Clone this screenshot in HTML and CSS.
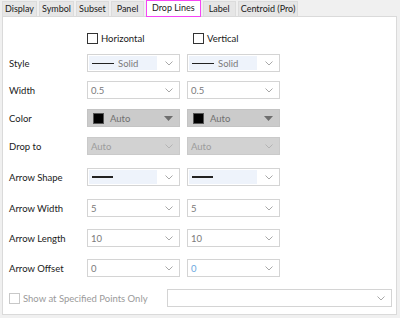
FILE: index.html
```html
<!DOCTYPE html>
<html lang="en">
<head>
    <meta charset="UTF-8">
    <title>Plot Details - Drop Lines</title>
    <link rel="stylesheet" href="styles.css">
</head>
<body>
    <div class="tabs">
        <div class="tab">Display</div>
        <div class="tab">Symbol</div>
        <div class="tab">Subset</div>
        <div class="tab">Panel</div>
        <div class="tab active">Drop Lines</div>
        <div class="tab">Label</div>
        <div class="tab">Centroid (Pro)</div>
    </div>

    <div class="panel">
        <div class="form">
            <div class="row checks">
                <div></div>
                <div class="check"><span class="box"></span>Horizontal</div>
                <div class="check second"><span class="box"></span>Vertical</div>
            </div>

            <div class="row first">
                <div class="label">Style</div>
                <div class="combo"><span class="pick"><span class="line thin"></span>Solid</span><svg class="chev" width="8" height="5" viewBox="0 0 8 5"><polyline points="0.5,0.5 4,4 7.5,0.5" fill="none" stroke="#a8a8a8"/></svg></div>
                <div class="combo"><span class="pick"><span class="line thin"></span>Solid</span><svg class="chev" width="8" height="5" viewBox="0 0 8 5"><polyline points="0.5,0.5 4,4 7.5,0.5" fill="none" stroke="#a8a8a8"/></svg></div>
            </div>

            <div class="row">
                <div class="label">Width</div>
                <div class="combo"><span class="val">0.5</span><svg class="chev" width="8" height="5" viewBox="0 0 8 5"><polyline points="0.5,0.5 4,4 7.5,0.5" fill="none" stroke="#a8a8a8"/></svg></div>
                <div class="combo"><span class="val">0.5</span><svg class="chev" width="8" height="5" viewBox="0 0 8 5"><polyline points="0.5,0.5 4,4 7.5,0.5" fill="none" stroke="#a8a8a8"/></svg></div>
            </div>

            <div class="row">
                <div class="label">Color</div>
                <div class="combo color"><span class="val"><span class="swatch"></span>Auto</span><svg class="tri" width="9" height="5" viewBox="0 0 9 5"><polygon points="0,0 9,0 4.5,5" fill="#6e6e6e"/></svg></div>
                <div class="combo color"><span class="val"><span class="swatch"></span>Auto</span><svg class="tri" width="9" height="5" viewBox="0 0 9 5"><polygon points="0,0 9,0 4.5,5" fill="#6e6e6e"/></svg></div>
            </div>

            <div class="row loose">
                <div class="label">Drop to</div>
                <div class="combo disabled"><span class="val">Auto</span><svg class="chev" width="8" height="5" viewBox="0 0 8 5"><polyline points="0.5,0.5 4,4 7.5,0.5" fill="none" stroke="#b4b4b4"/></svg></div>
                <div class="combo disabled"><span class="val">Auto</span><svg class="chev" width="8" height="5" viewBox="0 0 8 5"><polyline points="0.5,0.5 4,4 7.5,0.5" fill="none" stroke="#b4b4b4"/></svg></div>
            </div>

            <div class="row loose">
                <div class="label">Arrow Shape</div>
                <div class="combo"><span class="pick"><span class="line thick"></span></span><svg class="chev" width="8" height="5" viewBox="0 0 8 5"><polyline points="0.5,0.5 4,4 7.5,0.5" fill="none" stroke="#a8a8a8"/></svg></div>
                <div class="combo"><span class="pick"><span class="line thick"></span></span><svg class="chev" width="8" height="5" viewBox="0 0 8 5"><polyline points="0.5,0.5 4,4 7.5,0.5" fill="none" stroke="#a8a8a8"/></svg></div>
            </div>

            <div class="row wide">
                <div class="label">Arrow Width</div>
                <div class="combo"><span class="val">5</span><svg class="chev" width="8" height="5" viewBox="0 0 8 5"><polyline points="0.5,0.5 4,4 7.5,0.5" fill="none" stroke="#a8a8a8"/></svg></div>
                <div class="combo"><span class="val">5</span><svg class="chev" width="8" height="5" viewBox="0 0 8 5"><polyline points="0.5,0.5 4,4 7.5,0.5" fill="none" stroke="#a8a8a8"/></svg></div>
            </div>

            <div class="row wide">
                <div class="label">Arrow Length</div>
                <div class="combo"><span class="val">10</span><svg class="chev" width="8" height="5" viewBox="0 0 8 5"><polyline points="0.5,0.5 4,4 7.5,0.5" fill="none" stroke="#a8a8a8"/></svg></div>
                <div class="combo"><span class="val">10</span><svg class="chev" width="8" height="5" viewBox="0 0 8 5"><polyline points="0.5,0.5 4,4 7.5,0.5" fill="none" stroke="#a8a8a8"/></svg></div>
            </div>

            <div class="row wide">
                <div class="label">Arrow Offset</div>
                <div class="combo"><span class="val">0</span><svg class="chev" width="8" height="5" viewBox="0 0 8 5"><polyline points="0.5,0.5 4,4 7.5,0.5" fill="none" stroke="#a8a8a8"/></svg></div>
                <div class="combo"><span class="val blue">0</span><svg class="chev" width="8" height="5" viewBox="0 0 8 5"><polyline points="0.5,0.5 4,4 7.5,0.5" fill="none" stroke="#a8a8a8"/></svg></div>
            </div>
        </div>

        <div class="bottom">
            <div class="check off"><span class="box"></span>Show at Specified Points Only</div>
            <div class="combo long"><span class="val"></span><svg class="chev" width="8" height="5" viewBox="0 0 8 5"><polyline points="0.5,0.5 4,4 7.5,0.5" fill="none" stroke="#a8a8a8"/></svg></div>
        </div>
    </div>
</body>
</html>
```

FILE: styles.css
```css
body {
    margin: 0;
    background: #f0f0f0;
    font-family: Lato, "Noto Sans", sans-serif;
    font-size: 9.5px;
    color: #1a1a1a;
    width: 400px;
    height: 318px;
    overflow: hidden;
}
.tabs {
    display: flex;
    gap: 2px;
    padding-left: 2px;
    height: 16px;
    align-items: flex-end;
    font-size: 9px;
}
.tab {
    height: 15px;
    line-height: 14px;
    min-width: 33px;
    padding: 0 2px;
    text-align: center;
    background: #e6e6e6;
    border: 1px solid #dcdcdc;
    border-bottom: none;
    box-sizing: border-box;
    color: #1a1a1a;
}
.tab.active {
    background: #ffffff;
    border: 1px solid #f545f5;
    height: 17px;
    padding: 0 5px;
    margin-bottom: -1px;
    position: relative;
}
.panel {
    margin: 0 3px 0 2px;
    height: 299px;
    box-sizing: border-box;
    background: #ffffff;
    border: 1px solid #dadada;
    padding: 15px 0 0 6px;
}
.form {
    display: flex;
    flex-direction: column;
}
.row {
    display: grid;
    grid-template-columns: 71px 93px 93px;
    column-gap: 7px;
    align-items: center;
    height: 18px;
    margin-bottom: 10px;
}
.row.checks {
    height: 12px;
    margin-bottom: 10px;
}
.row.first {
    margin-bottom: 9px;
}
.row.loose {
    margin-bottom: 13px;
}
.row.wide {
    margin-bottom: 12px;
}
.label {
    color: #1a1a1a;
}
.check {
    display: flex;
    align-items: center;
    gap: 3px;
    color: #1a1a1a;
}
.check.second {
    padding-left: 6px;
}
.box {
    width: 9px;
    height: 9px;
    border: 1px solid #333;
    background: #fff;
}
.check.off {
    color: #9a9a9a;
}
.check.off .box {
    border-color: #c8c8c8;
}
.combo {
    height: 18px;
    box-sizing: border-box;
    border: 1px solid #d4d4d4;
    background: #fff;
    display: flex;
    align-items: center;
    padding: 1px 6px 1px 1px;
}
.combo .val {
    flex: 1;
    padding-left: 2px;
    color: #7a7a7a;
    display: flex;
    align-items: center;
}
.combo .val.blue {
    color: #6aa8e0;
}
.pick {
    flex: 1;
    align-self: stretch;
    margin-right: 8px;
    background: #eef3fb;
    display: flex;
    align-items: center;
    padding-left: 3px;
    color: #7a7a7a;
}
.line {
    display: inline-block;
    background: #222;
    margin-right: 4px;
}
.line.thin {
    width: 22px;
    height: 1px;
}
.line.thick {
    width: 21px;
    height: 2px;
}
.combo.color {
    background: #cbcbcb;
    border-color: #c4c4c4;
}
.combo.color .val {
    color: #707070;
}
.swatch {
    width: 9px;
    height: 9px;
    background: #000;
    border: 1px solid #555;
    margin: 0 6px 0 2px;
}
.combo.disabled {
    background: #d2d2d2;
    border-color: #cacaca;
}
.combo.disabled .val {
    color: #9c9c9c;
}
.bottom {
    display: flex;
    align-items: center;
    justify-content: space-between;
    padding-right: 4px;
}
.combo.long {
    width: 225px;
}
```
